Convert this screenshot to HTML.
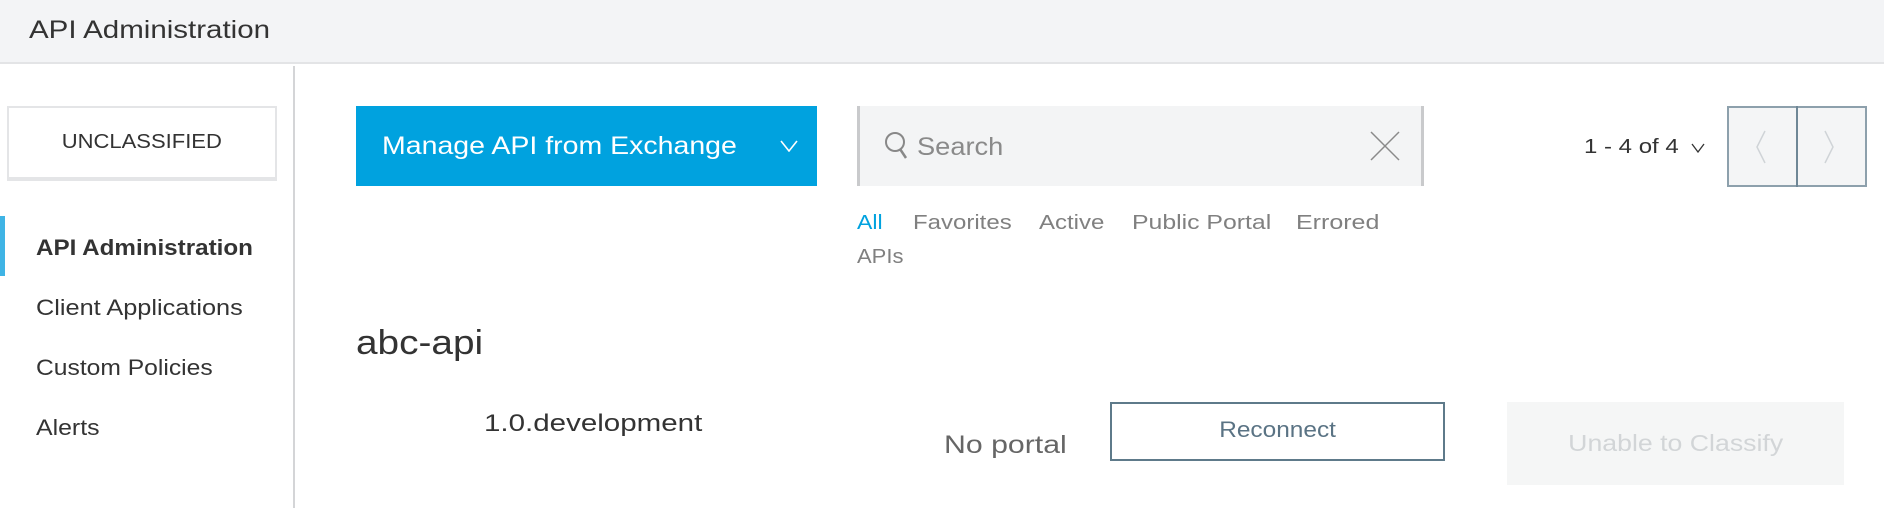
<!DOCTYPE html>
<html><head><style>
*{margin:0;padding:0;box-sizing:border-box}
body{width:1884px;height:508px;overflow:hidden;background:#fff;font-family:"Liberation Sans",sans-serif;position:relative;color:#333}
.a{position:absolute;white-space:nowrap;transform-origin:0 50%}
.c{display:inline-block;transform-origin:50% 50%}
</style></head><body>
<div class="a" style="left:0;top:0;width:1884px;height:64px;background:#f3f4f6;border-bottom:2px solid #e3e4e6"></div>
<div class="a" style="left:29px;top:16px;font-size:25px;color:#333;transform:scaleX(1.18)">API Administration</div>
<div class="a" style="left:293px;top:66px;width:2px;height:442px;background:#d4d5d7"></div>
<div class="a" style="left:7px;top:106px;width:270px;height:75px;border:2px solid #e4e5e7;border-bottom-width:4px;display:flex;align-items:center;justify-content:center;font-size:20px;color:#333"><span class="c" style="transform:scaleX(1.1)">UNCLASSIFIED</span></div>
<div class="a" style="left:0;top:216px;width:5px;height:60px;background:#3fb4e5"></div>
<div class="a" style="left:36px;top:235px;font-size:22px;font-weight:bold;color:#333;transform:scaleX(1.1)">API Administration</div>
<div class="a" style="left:36px;top:295px;font-size:22px;color:#333;transform:scaleX(1.15)">Client Applications</div>
<div class="a" style="left:36px;top:355px;font-size:22px;color:#333;transform:scaleX(1.12)">Custom Policies</div>
<div class="a" style="left:36px;top:415px;font-size:22px;color:#333;transform:scaleX(1.13)">Alerts</div>
<div class="a" style="left:356px;top:106px;width:461px;height:80px;background:#00a2df"></div>
<div class="a" style="left:382px;top:132px;font-size:25px;color:#fff;transform:scaleX(1.14)">Manage API from Exchange</div>
<svg class="a" style="left:780px;top:140px" width="18" height="12"><path d="M1 1 L9 11 L17 1" stroke="#fff" stroke-width="1.6" fill="none"/></svg>
<div class="a" style="left:857px;top:106px;width:567px;height:80px;background:#f3f4f5;border-left:3px solid #c9cacc;border-right:3px solid #c9cacc"></div>
<svg class="a" style="left:884px;top:131px" width="26" height="30"><circle cx="11" cy="11" r="9" stroke="#888" stroke-width="2" fill="none"/><path d="M16 18 L22 27" stroke="#888" stroke-width="2.5"/></svg>
<div class="a" style="left:917px;top:133px;font-size:25px;color:#8a8a8a;transform:scaleX(1.09)">Search</div>
<svg class="a" style="left:1370px;top:131px" width="30" height="30"><path d="M1 1 L29 29 M29 1 L1 29" stroke="#8a8a8a" stroke-width="1.5"/></svg>
<div class="a" style="left:857px;top:212px;font-size:20px;color:#00a2df;transform:scaleX(1.15)">All</div>
<div class="a" style="left:913px;top:212px;font-size:20px;color:#808080;transform:scaleX(1.2)">Favorites</div>
<div class="a" style="left:1039px;top:212px;font-size:20px;color:#808080;transform:scaleX(1.2)">Active</div>
<div class="a" style="left:1132px;top:212px;font-size:20px;color:#808080;transform:scaleX(1.24)">Public Portal</div>
<div class="a" style="left:1296px;top:212px;font-size:20px;color:#808080;transform:scaleX(1.25)">Errored</div>
<div class="a" style="left:857px;top:246px;font-size:20px;color:#808080;transform:scaleX(1.1)">APIs</div>
<div class="a" style="left:1584px;top:136px;font-size:20px;color:#333;transform:scaleX(1.2)">1 - 4 of 4</div>
<svg class="a" style="left:1691px;top:143px" width="14" height="10"><path d="M1 1 L7 9 L13 1" stroke="#333" stroke-width="1.3" fill="none"/></svg>
<div class="a" style="left:1727px;top:106px;width:140px;height:81px;background:#f4f5f6;border:2px solid #8da0ac"></div>
<div class="a" style="left:1796px;top:106px;width:2px;height:81px;background:#6f8796"></div>
<svg class="a" style="left:1755px;top:130px" width="12" height="34"><path d="M10 1 L2 17 L10 33" stroke="#d0d4d7" stroke-width="1.5" fill="none"/></svg>
<svg class="a" style="left:1823px;top:130px" width="12" height="34"><path d="M2 1 L10 17 L2 33" stroke="#d0d4d7" stroke-width="1.5" fill="none"/></svg>
<div class="a" style="left:356px;top:324px;font-size:34px;color:#333;transform:scaleX(1.14)">abc-api</div>
<div class="a" style="left:484px;top:410px;font-size:24px;color:#333;transform:scaleX(1.23)">1.0.development</div>
<div class="a" style="left:944px;top:431px;font-size:25px;color:#666;transform:scaleX(1.21)">No portal</div>
<div class="a" style="left:1110px;top:402px;width:335px;height:59px;border:2px solid #5e7a8a;display:flex;align-items:center;justify-content:center;font-size:22px;color:#5a7384;padding-bottom:3px"><span class="c" style="transform:scaleX(1.11)">Reconnect</span></div>
<div class="a" style="left:1507px;top:402px;width:337px;height:83px;background:#f5f6f6;display:flex;align-items:center;justify-content:center;font-size:23px;color:#d2d5d7"><span class="c" style="transform:scaleX(1.16)">Unable to Classify</span></div>
</body></html>
